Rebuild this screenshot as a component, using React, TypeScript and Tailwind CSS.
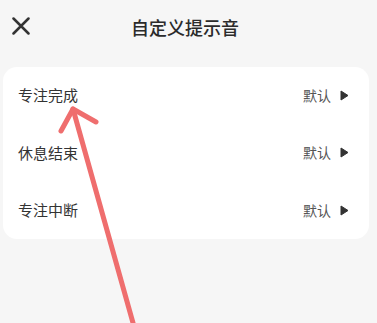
import React from "react";

const rows = ["专注完成", "休息结束", "专注中断"];

export default function App() {
  return (
    <div
      className="relative w-[377px] h-[323px] overflow-hidden bg-[#f6f6f6]"
      style={{ fontFamily: '"Noto Sans CJK SC", "Noto Sans", sans-serif' }}
    >
      <div className="relative h-[67px] flex items-start justify-center">
        <button className="absolute left-[12px] top-[17px] w-[18px] h-[18px] text-[#333]">
          <svg viewBox="0 0 18 18" width="18" height="18" fill="none" stroke="currentColor" strokeWidth="2.5" strokeLinecap="round">
            <path d="M1.5 1.5 L16.5 16.5 M16.5 1.5 L1.5 16.5" />
          </svg>
        </button>
        <div className="mt-[14px] pr-[7px] text-[18px] leading-[26px] text-[#2b2b2b] font-medium">自定义提示音</div>
      </div>
      <div className="mx-[3px] w-[366px] h-[172px] bg-white rounded-[14px] flex flex-col">
        {rows.map((r) => (
          <div key={r} className="flex-1 flex items-center pl-[15px] pr-[20px]">
            <span className="text-[15px] text-[#333]">{r}</span>
            <span className="ml-auto text-[14px] text-[#555]">默认</span>
            <svg className="ml-[9px]" width="9" height="11" viewBox="0 0 9 11">
              <path d="M1 1 L8 5.5 L1 10 Z" fill="#333" stroke="#333" strokeWidth="1" strokeLinejoin="round" />
            </svg>
          </div>
        ))}
      </div>
      <svg className="absolute left-0 top-0 pointer-events-none" width="377" height="323" viewBox="0 0 377 323">
        <g stroke="#ef6e6e" strokeWidth="5" strokeLinecap="round" strokeLinejoin="round" fill="none">
          <path d="M135 330 L73 109" />
          <path d="M61 131 L73 109 L96 122" />
        </g>
      </svg>
    </div>
  );
}
